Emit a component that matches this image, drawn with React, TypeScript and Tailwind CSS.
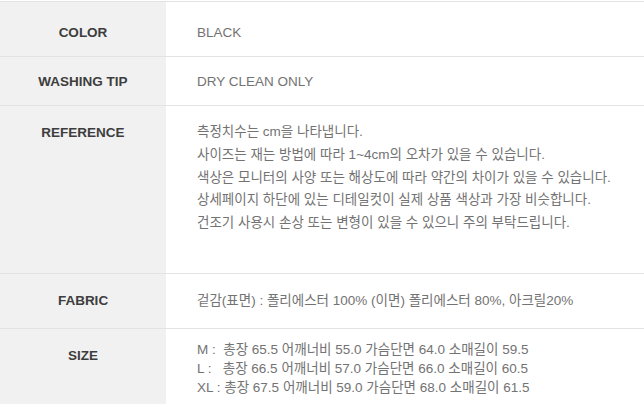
const font = "font-['Liberation_Sans','Noto_Sans_CJK_KR',sans-serif]"

function Label({ children }: { children: React.ReactNode }) {
  return (
    <div className="w-[166px] shrink-0 bg-[#f1f1f1] text-center text-[13.5px] font-bold text-[#3d3d3d]">
      {children}
    </div>
  )
}

export default function App() {
  return (
    <div className={`${font} w-[644px] h-[404px] overflow-hidden bg-white pt-px`}>
      <div className="border-t border-[#e3e3e3]">
        <div className="flex h-[55px] border-b border-[#e3e3e3]">
          <Label><div className="pt-[21px] leading-[20px]">COLOR</div></Label>
          <div className="flex-1 pl-[31px] pt-[21px] text-[13.5px] leading-[20px] text-[#737373]">BLACK</div>
        </div>
        <div className="flex h-[49px] border-b border-[#e3e3e3]">
          <Label><div className="pt-[15px] leading-[20px]">WASHING TIP</div></Label>
          <div className="flex-1 pl-[31px] pt-[15px] text-[13.5px] leading-[20px] text-[#737373]">DRY CLEAN ONLY</div>
        </div>
        <div className="flex h-[168px] border-b border-[#e3e3e3]">
          <Label><div className="pt-[16px] leading-[22.5px]">REFERENCE</div></Label>
          <div className="flex-1 pl-[31px] pt-[15px] text-[13.5px] leading-[22.75px] text-[#737373]">
            <p>측정치수는 cm을 나타냅니다.</p>
            <p>사이즈는 재는 방법에 따라 1~4cm의 오차가 있을 수 있습니다.</p>
            <p>색상은 모니터의 사양 또는 해상도에 따라 약간의 차이가 있을 수 있습니다.</p>
            <p>상세페이지 하단에 있는 디테일컷이 실제 상품 색상과 가장 비슷합니다.</p>
            <p>건조기 사용시 손상 또는 변형이 있을 수 있으니 주의 부탁드립니다.</p>
          </div>
        </div>
        <div className="flex h-[55px] border-b border-[#e3e3e3]">
          <Label><div className="pt-[17px] leading-[20px]">FABRIC</div></Label>
          <div className="flex-1 pl-[31px] pt-[17px] text-[13.5px] leading-[20px] text-[#737373]">
            겉감(표면) : 폴리에스터 100% (이면) 폴리에스터 80%, 아크릴20%
          </div>
        </div>
        <div className="flex h-[90px]">
          <Label><div className="pt-[17px] leading-[20px]">SIZE</div></Label>
          <div className="flex-1 pl-[31px] pt-[11px] text-[13.5px] leading-[19px] text-[#737373]">
            <p>M :&nbsp; 총장 65.5 어깨너비 55.0 가슴단면 64.0 소매길이 59.5</p>
            <p>L :&nbsp;&nbsp; 총장 66.5 어깨너비 57.0 가슴단면 66.0 소매길이 60.5</p>
            <p>XL : 총장 67.5 어깨너비 59.0 가슴단면 68.0 소매길이 61.5</p>
          </div>
        </div>
      </div>
    </div>
  )
}
